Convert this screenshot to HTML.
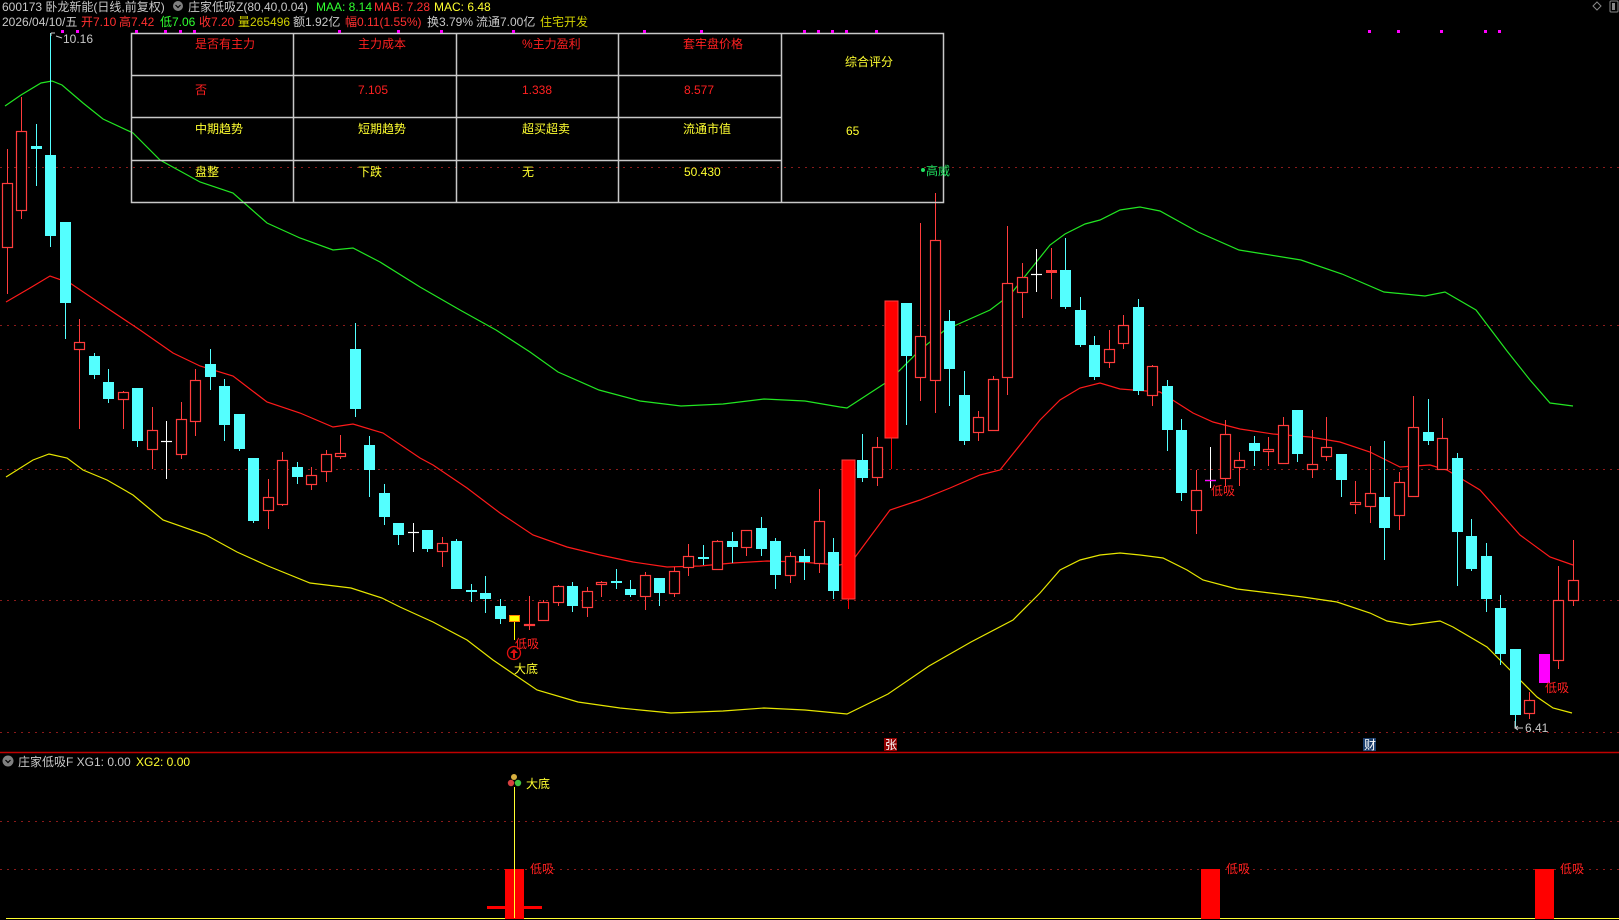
<!DOCTYPE html>
<html><head><meta charset="utf-8"><style>
html,body{margin:0;padding:0;background:#000;width:1619px;height:920px;overflow:hidden}
svg{display:block}
text{font-family:"Liberation Sans","Noto Sans CJK SC",sans-serif;font-size:12px}
</style></head><body>
<svg id="s" width="1619" height="920" viewBox="0 0 1619 920" xmlns="http://www.w3.org/2000/svg">
<rect width="1619" height="920" fill="#000"/>
<g stroke="#8a1a1a" stroke-dasharray="2,5" stroke-width="1">
<line x1="0" y1="167.5" x2="1619" y2="167.5"/>
<line x1="0" y1="325.5" x2="1619" y2="325.5"/>
<line x1="0" y1="469.5" x2="1619" y2="469.5"/>
<line x1="0" y1="600.5" x2="1619" y2="600.5"/>
<line x1="0" y1="732.5" x2="1619" y2="732.5"/>
<line x1="0" y1="821.5" x2="1619" y2="821.5"/>
<line x1="0" y1="869.5" x2="1619" y2="869.5"/>
</g>
<line x1="0" y1="752.5" x2="1619" y2="752.5" stroke="#c00000" stroke-width="1.5"/>
<g id="lines" fill="none" stroke-width="1.2"></g>
<g id="candles"></g>
<!-- table -->
<g stroke="#c8c8c8" stroke-width="1.5" fill="none">
<rect x="131.5" y="33.5" width="812" height="169" fill="none"/>
<line x1="293.5" y1="33" x2="293.5" y2="202"/>
<line x1="456.5" y1="33" x2="456.5" y2="202"/>
<line x1="618.5" y1="33" x2="618.5" y2="202"/>
<line x1="781.5" y1="33" x2="781.5" y2="202"/>
<line x1="131" y1="75.5" x2="781" y2="75.5"/>
<line x1="131" y1="117.5" x2="781" y2="117.5"/>
<line x1="131" y1="160.5" x2="781" y2="160.5"/>
</g>
<g fill="#ff2020">
<text x="195" y="48">是否有主力</text><text x="358" y="48">主力成本</text><text x="522" y="48">%主力盈利</text><text x="683" y="48">套牢盘价格</text>
<text x="195" y="94">否</text><text x="358" y="94">7.105</text><text x="522" y="94">1.338</text><text x="684" y="94">8.577</text>
</g>
<g fill="#ffff30">
<text x="195" y="133">中期趋势</text><text x="358" y="133">短期趋势</text><text x="522" y="133">超买超卖</text><text x="683" y="133">流通市值</text>
<text x="195" y="176">盘整</text><text x="358" y="176">下跌</text><text x="522" y="176">无</text><text x="684" y="176">50.430</text>
<text x="845" y="66">综合评分</text><text x="846" y="135">65</text>
</g>
<circle cx="923" cy="170" r="2" fill="#20e060"/>
<text x="926" y="175" fill="#20e060">高威</text>
<!-- header -->
<g>
<text x="2" y="11" fill="#c8c8c8">600173 卧龙新能(日线,前复权)</text>
<circle cx="178" cy="6" r="5" fill="#808080"/><path d="M175.5 5 L178 7.5 L180.5 5" stroke="#000" fill="none" stroke-width="1.2"/>
<text x="188" y="11" fill="#c8c8c8">庄家低吸Z(80,40,0.04)</text>
<text x="316" y="11" fill="#30ff30">MAA: 8.14</text>
<text x="374" y="11" fill="#ff3030">MAB: 7.28</text>
<text x="434" y="11" fill="#ffff30">MAC: 6.48</text>
<text x="2" y="26" fill="#c8c8c8">2026/04/10/五</text>
<text x="81" y="26" fill="#ff3030">开7.10</text>
<text x="119" y="26" fill="#ff3030">高7.42</text>
<text x="160" y="26" fill="#30ff30">低7.06</text>
<text x="199" y="26" fill="#ff3030">收7.20</text>
<text x="238" y="26" fill="#d0d000">量265496</text>
<text x="293" y="26" fill="#c8c8c8">额1.92亿</text>
<text x="345" y="26" fill="#ff3030">幅0.11(1.55%)</text>
<text x="427" y="26" fill="#c8c8c8">换3.79%</text>
<text x="476" y="26" fill="#c8c8c8">流通7.00亿</text>
<text x="540" y="26" fill="#d0d000">住宅开发</text>
<path d="M1597 2 L1601 6 L1597 10 L1593 6Z" stroke="#888" fill="none"/>
<rect x="1610" y="1" width="8" height="11" rx="1" stroke="#888" fill="none"/><rect x="1612" y="3" width="3" height="7" fill="#888"/>
</g>
<g id="dots" fill="#ff00ff"></g>
<text x="63" y="43" fill="#c8c8c8">10.16</text>
<path d="M51 33 L51 36 M51 33 L55 33 M56 36 L62 38" stroke="#c8c8c8" fill="none"/>
<!-- annotations -->
<text x="515" y="648" fill="#ff2020">低吸</text>
<circle cx="514" cy="653" r="6.5" stroke="#e01010" fill="none" stroke-width="1.3"/>
<path d="M514 649 L510 653 L518 653 Z M513 653 h2 v5 h-2z" fill="#e01010"/>
<text x="514" y="673" fill="#ffff30">大底</text>
<text x="1211" y="495" fill="#ff2020">低吸</text>
<text x="1545" y="692" fill="#ff2020">低吸</text>
<text x="1525" y="732" fill="#c8c8c8">6.41</text>
<path d="M1515 721 L1515 728 L1523 728 M1515 728 l3 -2 M1515 728 l3 2" stroke="#c8c8c8" fill="none"/>
<rect x="884" y="738" width="13" height="13" fill="#900000"/>
<text x="885" y="749" fill="#fff" font-size="11">张</text>
<rect x="1363" y="738" width="13" height="13" fill="#1a3d6b"/>
<text x="1364" y="749" fill="#fff" font-size="11">财</text>
<!-- lower pane -->
<circle cx="8" cy="761" r="5.5" fill="#808080"/><path d="M5.5 760 L8 762.5 L10.5 760" stroke="#000" fill="none" stroke-width="1.2"/>
<text x="18" y="766" fill="#c8c8c8">庄家低吸F  XG1: 0.00</text>
<text x="136" y="766" fill="#ffff30">XG2: 0.00</text>
<line x1="6" y1="918.5" x2="1619" y2="918.5" stroke="#ffff30"/>
<g fill="#ff0000">
<rect x="505" y="869" width="19" height="50"/>
<rect x="487" y="906" width="55" height="3"/>
<rect x="1201" y="869" width="19" height="50"/>
<rect x="1535" y="869" width="19" height="50"/>
</g>
<line x1="514.5" y1="787" x2="514.5" y2="918" stroke="#ffff30"/>
<circle cx="514" cy="777" r="3" fill="#d8b040"/>
<circle cx="511" cy="783" r="3.2" fill="#d84040"/>
<circle cx="518" cy="783" r="3.2" fill="#40c040"/>
<text x="526" y="788" fill="#ffff30">大底</text>
<text x="530" y="873" fill="#ff2020">低吸</text>
<text x="1226" y="873" fill="#ff2020">低吸</text>
<text x="1560" y="873" fill="#ff2020">低吸</text>
</svg>
<script>
var NS="http://www.w3.org/2000/svg";
function el(p,t,a){var e=document.createElementNS(NS,t);for(var k in a)e.setAttribute(k,a[k]);p.appendChild(e);return e;}
var C=[
[0,'u',183,247,149,294],[1,'u',131,210,97,219],[2,'d',146,149,124,186],[3,'d',155,236,33,247],[4,'d',222,303,222,339],
[5,'u',342,349,319,429],[6,'d',356,375,353,379],[7,'d',382,399,369,403],[8,'u',392,399,391,429],[9,'d',388,441,388,447],
[10,'u',430,449,407,469],[11,'w',441,441,421,479],[12,'u',419,454,402,459],[13,'u',380,421,369,436],[14,'d',364,377,349,390],
[15,'d',386,425,379,441],[16,'d',414,449,414,451],[17,'d',458,521,458,523],[18,'u',497,510,479,529],[19,'u',460,504,452,506],
[20,'d',467,477,462,484],[21,'u',475,484,467,490],[22,'u',454,471,450,482],[23,'u',453,456,435,459],[24,'d',349,409,323,417],
[25,'d',445,470,436,497],[26,'d',493,517,484,525],[27,'d',523,535,523,545],[28,'w',532,532,523,552],[29,'d',530,549,530,552],
[30,'u',543,551,537,567],[31,'d',541,589,539,589],[32,'d',590,592,584,602],[33,'d',593,599,576,613],[34,'d',606,619,599,624],
[35,'y',615,621,615,640],[36,'u',624,625,596,630],[37,'u',602,620,600,621],[38,'u',586,602,585,606],[39,'d',586,606,582,612],
[40,'u',591,607,587,617],[41,'u',582,584,581,597],[42,'d',581,583,569,589],[43,'d',589,595,580,597],[44,'u',575,596,572,610],
[45,'d',578,593,578,606],[46,'u',571,593,567,597],[47,'u',556,567,544,576],[48,'d',557,559,545,565],[49,'u',541,569,540,569],
[50,'d',541,547,532,563],[51,'u',530,547,530,556],[52,'d',528,549,517,556],[53,'d',541,575,538,589],[54,'u',556,575,552,583],
[55,'d',556,562,549,580],[56,'u',521,563,489,573],[57,'d',552,591,538,599],[58,'R',460,599,460,609],[59,'d',460,478,434,482],
[60,'u',447,477,437,486],[61,'R',301,438,301,469],[62,'d',303,356,303,425],[63,'u',336,377,223,401],[64,'u',240,380,193,413],
[65,'d',321,369,310,406],[66,'d',395,441,371,445],[67,'u',417,432,411,441],[68,'u',379,430,376,430],[69,'u',283,377,226,395],
[70,'u',277,292,263,318],[71,'w',274,274,249,292],[72,'f',270,273,248,299],[73,'d',270,307,238,309],[74,'d',310,345,297,347],
[75,'d',345,377,336,380],[76,'u',349,362,330,368],[77,'u',325,343,315,349],[78,'d',307,391,299,395],[79,'u',366,395,365,406],
[80,'d',386,430,380,451],[81,'d',430,493,419,501],[82,'u',490,510,470,534],[83,'w',480,480,447,488],[84,'u',434,478,420,486],
[85,'u',460,467,452,486],[86,'d',443,451,436,466],[87,'u',449,451,437,466],[88,'u',425,463,417,463],[89,'d',410,454,410,462],
[90,'u',464,469,430,478],[91,'u',447,456,417,461],[92,'d',454,480,454,497],[93,'u',502,504,481,514],[94,'u',493,506,446,523],
[95,'d',497,528,441,560],[96,'u',482,515,472,530],[97,'u',427,496,396,497],[98,'d',432,441,399,445],[99,'u',438,469,418,469],
[100,'d',458,532,453,586],[101,'d',536,569,519,571],[102,'d',556,599,543,612],[103,'d',608,654,595,665],[104,'d',649,715,649,727],
[105,'u',700,713,692,719],[106,'m',654,683,654,683],[107,'u',600,660,566,669],[108,'u',580,600,540,606]];
var g=document.getElementById('candles');
C.forEach(function(c){
 var x=Math.round(6.5+14.5*c[0]),t=c[1],top=c[2],bot=c[3],hi=c[4],lo=c[5];
 var col={u:'#ff3c3c',d:'#54ffff',w:'#ffffff',y:'#ffff00',R:'#ff0000',m:'#ff00ff',f:'#ff3c3c'}[t];
 el(g,'line',{x1:x+.5,x2:x+.5,y1:hi,y2:lo,stroke:col,'stroke-width':1});
 if(t=='u'){el(g,'rect',{x:x-5+.5,y:top+.5,width:10,height:Math.max(bot-top,1),fill:'#000',stroke:col,'stroke-width':1.2});}
 else if(t=='w'){el(g,'line',{x1:x-5,x2:x+6,y1:top+.5,y2:top+.5,stroke:col,'stroke-width':1.2});
   if(c[0]==83)el(g,'line',{x1:x-5,x2:x+6,y1:top+.5,y2:top+.5,stroke:'#ff00ff','stroke-width':1.2});}
 else if(t=='y'){el(g,'rect',{x:x-5+.5,y:top+.5,width:10,height:bot-top,fill:'#ffff00',stroke:'#ff8000','stroke-width':1});}
 else if(t=='R'){el(g,'rect',{x:x-6,y:top,width:13,height:bot-top,fill:'#ff0000',stroke:'#ff4040','stroke-width':1});}
 else {el(g,'rect',{x:x-5,y:top,width:11,height:Math.max(bot-top,2),fill:col});}
});
var L={
'#22e622':[[5,106],[21,95],[41,83],[52,81],[62,85],[83,103],[103,119],[133,133],[160,160],[200,182],[233,193],[267,223],[300,238],[333,250],[353,248],[380,262],[420,287],[460,310],[496,330],[530,352],[558,372],[599,390],[640,401],[681,406],[723,404],[764,399],[805,401],[840,407],[847,408],[890,380],[920,350],[945,330],[990,310],[1010,295],[1030,270],[1050,245],[1065,234],[1085,224],[1100,220],[1120,210],[1140,207],[1160,211],[1198,232],[1239,250],[1301,260],[1342,274],[1384,292],[1425,296],[1445,292],[1476,310],[1507,351],[1530,380],[1550,403],[1573,406]],
'#ff1a1a':[[6,302],[30,288],[50,276],[70,283],[107,308],[140,330],[173,353],[200,366],[233,376],[267,402],[300,413],[333,427],[353,424],[383,433],[420,458],[433,465],[467,488],[500,513],[533,535],[567,547],[600,555],[633,562],[667,567],[700,566],[733,563],[767,561],[800,562],[840,565],[853,560],[890,510],[920,500],[950,488],[980,475],[1000,470],[1020,445],[1040,420],[1060,400],[1080,388],[1100,383],[1120,389],[1160,392],[1193,413],[1213,422],[1240,429],[1273,434],[1310,437],[1340,442],[1370,452],[1400,467],[1430,465],[1447,470],[1480,490],[1520,535],[1550,557],[1573,565]],
'#e6e600':[[6,477],[33,460],[49,454],[67,458],[83,470],[107,480],[133,495],[163,520],[206,535],[237,552],[268,566],[310,583],[351,588],[382,598],[400,607],[433,622],[467,640],[493,660],[537,690],[578,702],[620,708],[671,713],[723,711],[764,708],[805,710],[847,714],[888,694],[929,666],[971,642],[1013,620],[1040,593],[1060,570],[1080,560],[1100,555],[1120,553],[1140,555],[1163,558],[1187,570],[1203,580],[1237,589],[1270,593],[1303,597],[1337,602],[1370,613],[1387,621],[1410,625],[1440,621],[1453,627],[1487,647],[1503,663],[1520,680],[1537,697],[1553,708],[1572,713]]};
var lg=document.getElementById('lines');
for(var k in L){el(lg,'polyline',{points:L[k].map(function(p){return p.join(',')}).join(' '),stroke:k});}
var dg=document.getElementById('dots');
[62,77,136,165,180,194,339,398,441,513,644,701,804,818,832,846,876,1369,1398,1441,1485,1499].forEach(function(x){el(dg,'rect',{x:x-1,y:30,width:3,height:3});});
</script>
</body></html>
